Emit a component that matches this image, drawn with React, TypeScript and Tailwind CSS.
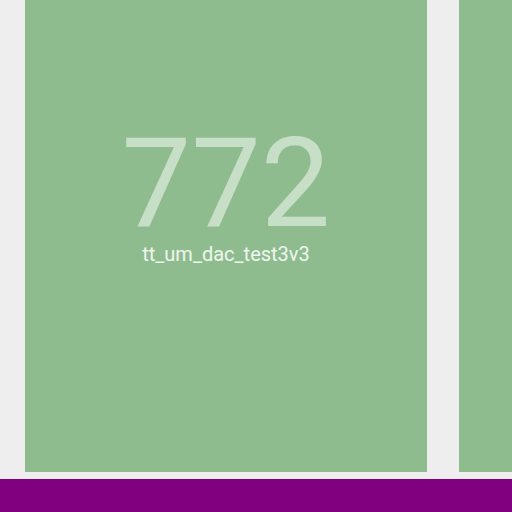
export default function App() {
  return (
    <div
      className="w-[512px] h-[512px] overflow-hidden flex flex-col bg-[#eeeeee]"
      style={{ fontFamily: "Roboto, 'Noto Sans', sans-serif" }}
    >
      <div className="h-[479px] flex flex-row gap-[32px] pl-[25px] items-start">
        <div className="w-[402px] h-[472px] shrink-0 bg-[#8fbc8f] flex flex-col items-center pt-[122px]">
          <div className="text-[124px] leading-none text-white/50">772</div>
          <div className="text-[20px] leading-[16px] text-white/85">tt_um_dac_test3v3</div>
        </div>
        <div className="w-[402px] h-[472px] shrink-0 bg-[#8fbc8f]" />
      </div>
      <div className="h-[33px] bg-[#800080]" />
    </div>
  );
}
